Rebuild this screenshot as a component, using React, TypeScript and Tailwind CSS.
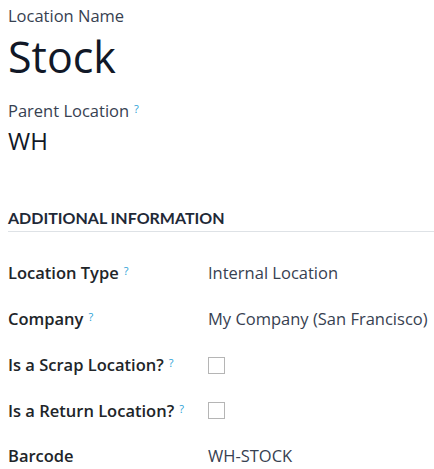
/**
 * Stock location form
 */

const rows: { label: string; help: boolean; value?: string; checkbox?: boolean }[] = [
  { label: 'Location Type', help: true, value: 'Internal Location' },
  { label: 'Company', help: true, value: 'My Company (San Francisco)' },
  { label: 'Is a Scrap Location?', help: true, checkbox: true },
  { label: 'Is a Return Location?', help: true, checkbox: true },
  { label: 'Barcode', help: false, value: 'WH-STOCK' },
];

function Help() {
  return (
    <sup className="ml-[5px] text-[11px] font-normal text-[#2a9fd6] relative -top-[4px]">?</sup>
  );
}

export default function App() {
  return (
    <div
      className="w-[434px] h-[469px] bg-white pl-2 overflow-hidden"
      style={{ fontFamily: '"Open Sans", "Noto Sans", sans-serif' }}
    >
      {/* Title */}
      <div className="pt-[5px] text-[16.5px] leading-[22px] text-[#374151]">Location Name</div>
      <div className="mt-[4px] text-[43px] leading-[52px] text-[#111827]">Stock</div>

      {/* Parent */}
      <div className="mt-[17px] text-[16.5px] leading-[22px] text-[#374151]">
        Parent Location
        <Help />
      </div>
      <div className="mt-[4px] text-[24px] leading-[30px] text-[#111827]">WH</div>

      {/* Additional information */}
      <div className="mt-[51px] border-b border-[#dee2e6] pb-[2px]">
        <h3
          className="text-[16px] leading-[22px] font-bold text-[#1f2937] uppercase"
          style={{ fontFamily: 'Lato, "Open Sans", sans-serif' }}
        >
          Additional Information
        </h3>
      </div>

      <div className="mt-[19px] flex flex-col">
        {rows.map((row, index) => (
          <div key={index} className="flex items-center h-[45.7px]">
            <div className="w-[200px] text-[16.5px] font-semibold text-[#212529]">
              {row.label}
              {row.help && <Help />}
            </div>
            {row.checkbox ? (
              <div className="w-[17px] h-[17px] border border-[#b5b5b5] bg-white" />
            ) : (
              <div className="text-[16.5px] text-[#374151]">{row.value}</div>
            )}
          </div>
        ))}
      </div>
    </div>
  );
}
